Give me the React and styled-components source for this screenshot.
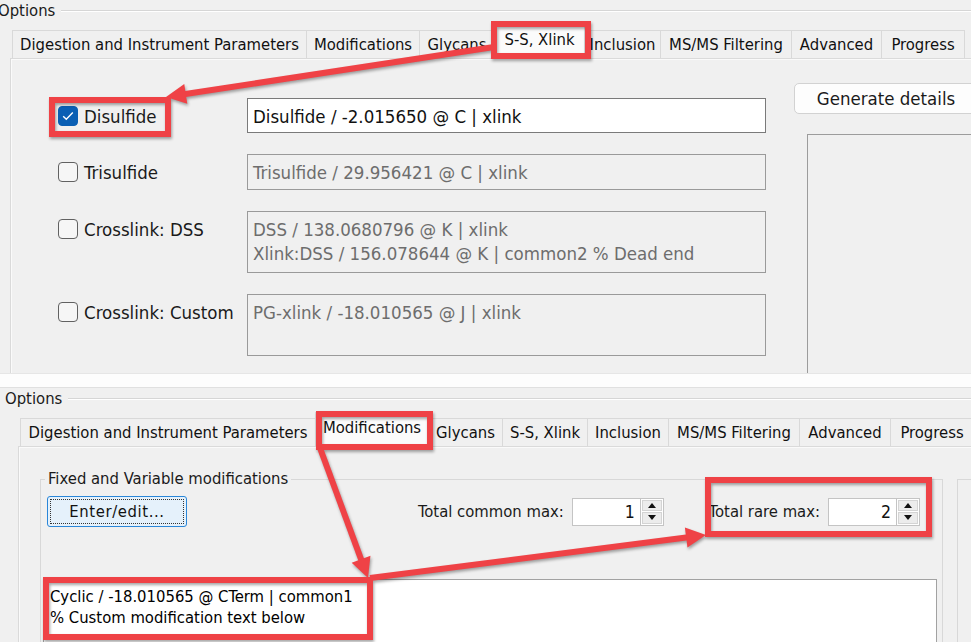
import React from 'react';
import styled, { createGlobalStyle, css } from 'styled-components';

const uiFont = css`
  font-family: "DejaVu Sans", "Liberation Sans", sans-serif;
  font-stretch: condensed;
  font-size: 16.5px;
`;

const GlobalStyle = createGlobalStyle`
  html, body { margin: 0; padding: 0; background: #f0f0f0; }
  body { width: 971px; height: 642px; overflow: hidden; }
  * { box-sizing: border-box; }
`;

const Page = styled.div`
  position: relative;
  width: 971px;
  height: 642px;
  overflow: hidden;
  display: flex;
  flex-direction: column;
  background: #f0f0f0;
  color: #1a1a1a;
  ${uiFont};
`;

const Shot = styled.section`
  flex: none;
  height: ${(p) => p.$h}px;
  display: flex;
  flex-direction: column;
  overflow: hidden;
  background: #f0f0f0;
`;

const Separator = styled.div`
  flex: none;
  height: 15px;
  background: #fdfdfd;
  border-top: 1px solid #e6e6e6;
  border-bottom: 1px solid #e0e0e0;
`;

const LegendRow = styled.div`
  height: 22px;
  display: flex;
  align-items: center;
  gap: 6px;
  overflow: hidden;
`;

const LegendText = styled.span`
  margin-left: ${(p) => p.$x}px;
  line-height: 20px;
  white-space: nowrap;
`;

const LegendLine = styled.div`
  flex: 1;
  height: 2px;
  border-top: 1px solid #d6d6d6;
  border-bottom: 1px solid #ffffff;
`;

const TabStrip = styled.div`
  height: 36px;
  display: flex;
  align-items: flex-end;
  padding-left: ${(p) => p.$x}px;
`;

const Tab = styled.div`
  flex: none;
  width: ${(p) => p.$w}px;
  height: ${(p) => (p.$active ? 34 : 28)}px;
  display: flex;
  align-items: center;
  justify-content: center;
  padding-bottom: ${(p) => (p.$active ? 4 : 0)}px;
  border: 1px solid #d9d9d9;
  border-bottom: none;
  margin-left: -1px;
  background: ${(p) => (p.$active ? '#fbfbfb' : '#f0f0f0')};
  white-space: nowrap;
  color: #111;
`;

const TabBody = styled.div`
  flex: 1;
  margin-left: ${(p) => p.$x}px;
  border-left: 1px solid #dadada;
  border-top: 1px solid #dadada;
  box-shadow: inset 1px 1px 0 #fafafa;
  display: flex;
  align-items: flex-start;
  min-height: 0;
`;

/* ---------- top panel: S-S, Xlink ---------- */

const XlinkContent = styled.div`
  flex: 1;
  align-self: stretch;
  display: flex;
  padding: 24px 0 0 47px;
  font-size: 18.5px;
`;

const Rows = styled.div`
  margin-top: 15px;
  display: grid;
  grid-template-columns: 189px 519px;
  row-gap: 21px;
  align-content: start;
`;

const CheckCell = styled.label`
  display: flex;
  align-items: center;
  gap: 6px;
  height: 20px;
  margin-top: 8px;
  white-space: nowrap;
`;

const Box = styled.span`
  flex: none;
  width: 20px;
  height: 20px;
  border-radius: 4px;
  border: 1px solid ${(p) => (p.$checked ? '#0a5fb4' : '#616161')};
  background: ${(p) => (p.$checked ? '#0a5fb4' : '#f6f6f6')};
  display: flex;
  align-items: center;
  justify-content: center;
`;

const Field = styled.div`
  height: ${(p) => p.$h}px;
  border: 1px solid ${(p) => (p.$enabled ? '#7a7a7a' : '#9a9a9a')};
  background: ${(p) => (p.$enabled ? '#ffffff' : '#f0f0f0')};
  color: ${(p) => (p.$enabled ? '#111' : '#6d6d6d')};
  padding: 6px 5px;
  line-height: 24px;
  white-space: pre;
  overflow: hidden;
`;

const RightCol = styled.div`
  margin-left: 28px;
  flex: 1;
  align-self: stretch;
  display: flex;
  flex-direction: column;
`;

const GenButton = styled.div`
  width: 184px;
  height: 31px;
  border: 1px solid #d2d2d2;
  border-radius: 5px;
  background: #fdfdfd;
  display: flex;
  align-items: center;
  justify-content: center;
  white-space: nowrap;
  color: #1a1a1a;
`;

const DetailsBox = styled.div`
  flex: 1;
  margin: 20px 0 0 13px;
  border-left: 1px solid #9c9c9c;
  border-top: 1px solid #9c9c9c;
  background: #f0f0f0;
`;

/* ---------- bottom panel: Modifications ---------- */

const ModContent = styled.div`
  flex: 1;
  display: flex;
  align-items: flex-start;
  padding-left: 21px;
`;

const Group = styled.fieldset`
  flex: none;
  width: 903px;
  margin: 22px 0 0 0;
  padding: 0;
  min-width: 0;
  border: 1px solid #d8d8d8;
  border-bottom: none;
  height: 300px;
`;

const GroupLegend = styled.legend`
  margin-left: 4px;
  padding: 0 3px;
  line-height: 20px;
  ${uiFont};
  color: #1a1a1a;
`;

const SideGroup = styled.div`
  flex: 1;
  height: 300px;
  margin: 32px 0 0 14px;
  border-left: 1px solid #d8d8d8;
  border-top: 1px solid #d8d8d8;
`;

const Controls = styled.div`
  margin-top: 7px;
  height: 31px;
  display: flex;
  align-items: center;
  padding: 0 22px 0 6px;
`;

const EnterButton = styled.div`
  width: 140px;
  height: 31px;
  border: 1px solid #2a86d8;
  border-radius: 3px;
  background: #e5f1fb;
  outline: 1px dotted #333;
  outline-offset: -4px;
  display: flex;
  align-items: center;
  justify-content: center;
  white-space: nowrap;
  letter-spacing: 0.6px;
  color: #111;
`;

const Spacer = styled.div`
  flex: 1;
`;

const SpinGroup = styled.div`
  display: flex;
  align-items: center;
  gap: 8px;
  margin-left: ${(p) => p.$ml || 0}px;
  white-space: nowrap;
`;

const Spinner = styled.div`
  width: 92px;
  height: 28px;
  display: flex;
  border: 1px solid #c4c4c4;
  background: #fff;
`;

const SpinValue = styled.div`
  flex: 1;
  text-align: right;
  padding-right: 5px;
  line-height: 26px;
  font-size: 17.5px;
  color: #111;
`;

const SpinButtons = styled.div`
  width: 23px;
  display: flex;
  flex-direction: column;
  border-left: 1px solid #c4c4c4;
  padding: 1px;
  gap: 1px;
  background: #fff;
`;

const SpinBtn = styled.div`
  flex: 1;
  background: #ececec;
  border: 1px solid #d4d4d4;
  display: flex;
  align-items: center;
  justify-content: center;
`;

const TextArea = styled.div`
  margin: 52px 0 0 2px;
  width: 894px;
  height: 90px;
  border: 1px solid #a2a2a2;
  background: #fff;
  padding: 6px 6px;
  line-height: 21px;
  font-size: 16.5px;
  color: #000;
  white-space: pre;
`;

const Overlay = styled.svg`
  position: absolute;
  left: 0;
  top: 0;
  pointer-events: none;
  overflow: visible;
`;

const RED = '#ef4246';

function arrowPoints(x1, y1, tx, ty, head = 20, half = 10) {
  const dx = tx - x1;
  const dy = ty - y1;
  const len = Math.hypot(dx, dy);
  const ux = dx / len;
  const uy = dy / len;
  const bx = tx - ux * head;
  const by = ty - uy * head;
  const px = -uy;
  const py = ux;
  return {
    line: [x1, y1, bx + ux * 2, by + uy * 2],
    head: `${tx},${ty} ${bx + px * half},${by + py * half} ${bx - px * half},${by - py * half}`,
  };
}

function Arrow({ from, to }) {
  const a = arrowPoints(from[0], from[1], to[0], to[1]);
  return (
    <g>
      <line x1={a.line[0]} y1={a.line[1]} x2={a.line[2]} y2={a.line[3]} stroke={RED} strokeWidth="6" />
      <polygon points={a.head} fill={RED} />
    </g>
  );
}

function Annotations() {
  const boxes = [
    [494, 24, 94, 32],
    [52, 100, 116, 34],
    [319, 414, 111, 33],
    [708, 480, 221, 54],
    [46, 580, 324, 57],
  ];
  return (
    <Overlay width="971" height="642" viewBox="0 0 971 642">
      <g style={{ filter: 'drop-shadow(1px 2px 1.5px rgba(0,0,0,0.35))' }}>
        {boxes.map(([x, y, w, h], i) => (
          <rect key={i} x={x} y={y} width={w} height={h} fill="none" stroke={RED} strokeWidth="6" />
        ))}
        <Arrow from={[494, 47]} to={[166, 97]} />
        <Arrow from={[320, 448]} to={[368, 578]} />
        <Arrow from={[370, 578]} to={[706, 535]} />
      </g>
    </Overlay>
  );
}

function Check() {
  return (
    <svg width="12" height="10" viewBox="0 0 12 10">
      <path d="M1.2 5.2 L4.3 8.2 L10.8 1.6" fill="none" stroke="#fff" strokeWidth="1.4" />
    </svg>
  );
}

function Tri({ down }) {
  return (
    <svg width="8" height="5" viewBox="0 0 8 5">
      <polygon points={down ? '0,0 8,0 4,5' : '0,5 8,5 4,0'} fill="#111" />
    </svg>
  );
}

function Tabs({ x, tabs }) {
  return (
    <TabStrip $x={x}>
      {tabs.map((t) => (
        <Tab key={t.label} $w={t.w} $active={t.active}>
          {t.label}
        </Tab>
      ))}
    </TabStrip>
  );
}

function Spin({ value }) {
  return (
    <Spinner>
      <SpinValue>{value}</SpinValue>
      <SpinButtons>
        <SpinBtn><Tri /></SpinBtn>
        <SpinBtn><Tri down /></SpinBtn>
      </SpinButtons>
    </Spinner>
  );
}

const topTabs = [
  { label: 'Digestion and Instrument Parameters', w: 295 },
  { label: 'Modifications', w: 114 },
  { label: 'Glycans', w: 76 },
  { label: 'S-S, Xlink', w: 91, active: true },
  { label: 'Inclusion', w: 77 },
  { label: 'MS/MS Filtering', w: 132 },
  { label: 'Advanced', w: 91 },
  { label: 'Progress', w: 84 },
];

const bottomTabs = [
  { label: 'Digestion and Instrument Parameters', w: 296 },
  { label: 'Modifications', w: 114, active: true },
  { label: 'Glycans', w: 75 },
  { label: 'S-S, Xlink', w: 86 },
  { label: 'Inclusion', w: 82 },
  { label: 'MS/MS Filtering', w: 132 },
  { label: 'Advanced', w: 92 },
  { label: 'Progress', w: 84 },
];

const xlinkRows = [
  { label: 'Disulfide', checked: true, text: 'Disulfide / -2.015650 @ C | xlink', h: 35 },
  { label: 'Trisulfide', text: 'Trisulfide / 29.956421 @ C | xlink', h: 36 },
  {
    label: 'Crosslink: DSS',
    text: 'DSS / 138.0680796 @ K | xlink\nXlink:DSS / 156.078644 @ K | common2 % Dead end',
    h: 62,
  },
  { label: 'Crosslink: Custom', text: 'PG-xlink / -18.010565 @ J | xlink', h: 62 },
];

export default function App() {
  return (
    <>
      <GlobalStyle />
      <Page>
        <Shot $h={373}>
          <LegendRow>
            <LegendText $x={-2}>Options</LegendText>
            <LegendLine />
          </LegendRow>
          <Tabs x={13} tabs={topTabs} />
          <TabBody $x={10}>
            <XlinkContent>
              <Rows>
                {xlinkRows.map((r) => (
                  <React.Fragment key={r.label}>
                    <CheckCell>
                      <Box $checked={r.checked}>{r.checked && <Check />}</Box>
                      {r.label}
                    </CheckCell>
                    <Field $h={r.h} $enabled={r.checked}>{r.text}</Field>
                  </React.Fragment>
                ))}
              </Rows>
              <RightCol>
                <GenButton>Generate details</GenButton>
                <DetailsBox />
              </RightCol>
            </XlinkContent>
          </TabBody>
        </Shot>
        <Separator />
        <Shot $h={254}>
          <LegendRow>
            <LegendText $x={5}>Options</LegendText>
            <LegendLine />
          </LegendRow>
          <Tabs x={21} tabs={bottomTabs} />
          <TabBody $x={18}>
            <ModContent>
              <Group>
                <GroupLegend>Fixed and Variable modifications</GroupLegend>
                <Controls>
                  <EnterButton>Enter/edit...</EnterButton>
                  <Spacer />
                  <SpinGroup>
                    Total common max:
                    <Spin value="1" />
                  </SpinGroup>
                  <SpinGroup $ml={45}>
                    Total rare max:
                    <Spin value="2" />
                  </SpinGroup>
                </Controls>
                <TextArea>{'Cyclic / -18.010565 @ CTerm | common1\n% Custom modification text below'}</TextArea>
              </Group>
              <SideGroup />
            </ModContent>
          </TabBody>
        </Shot>
        <Annotations />
      </Page>
    </>
  );
}
